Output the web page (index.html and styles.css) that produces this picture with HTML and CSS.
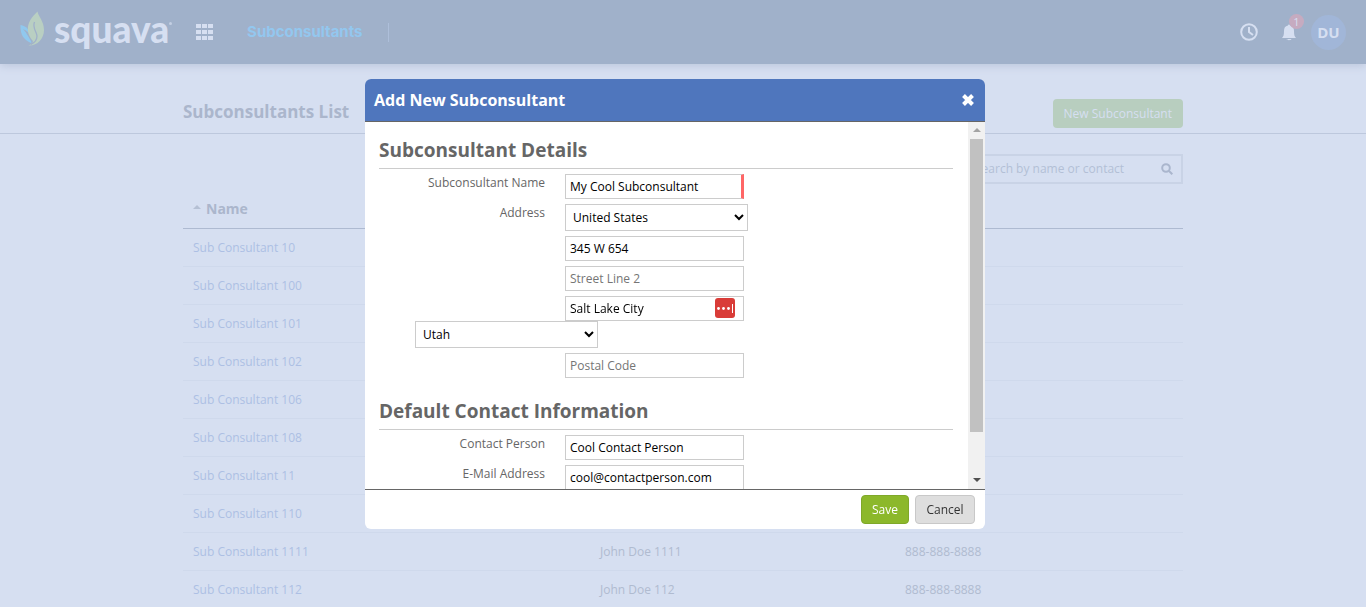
FILE: index.html
```html
<!DOCTYPE html>
<html lang="en">
<head>
<meta charset="utf-8">
<title>Subconsultants List</title>
<meta name="viewport" content="width=device-width, initial-scale=1">
<link rel="stylesheet" href="styles.css">
</head>
<body>
<div class="page">
  <header class="topbar">
    <a class="brand" href="#">
      <svg class="brand-mark" viewBox="0 0 25 36" aria-hidden="true">
        <path fill="#90c8ee" d="M0.500 14C6 15 10 19 12 25C13 28 13 30 11 32C4 29 0 24 0.500 14Z"/>
        <path fill="#a0b1ca" d="M3 18C7 22 9 27 12 32L13 27C10 22 7 20 3 18Z"/>
        <path fill="#b9cfc2" d="M17.500 0.500C18 5 24 10 24 19C24 28 17 35 8.500 34.500C11 34 13 32 13 30C6 22 5 12 17.500 0.500Z"/>
        <path fill="none" stroke="#a0b1ca" stroke-width="1.300" d="M14.500 11C12 17 17 21 17 25C17 29 14 32 11 33.500"/>
      </svg>
      <span class="brand-name">squava</span><span class="brand-reg"></span>
    </a>
    <button class="icon-btn apps" aria-label="Apps">
      <svg width="17" height="16" viewBox="0 0 17 16" fill="currentColor" aria-hidden="true">
        <path d="M0 0h5v4H0zM6 0h5v4H6zM12 0h5v4h-5zM0 6h5v4H0zM6 6h5v4H6zM12 6h5v4h-5zM0 12h5v4H0zM6 12h5v4H6zM12 12h5v4h-5z"/>
      </svg>
    </button>
    <nav class="nav"><a href="#">Subconsultants</a></nav>
    <div class="tools">
      <button class="icon-btn" aria-label="Recent">
        <svg width="18" height="18" viewBox="0 0 18 18" fill="none" stroke="currentColor" stroke-width="2" aria-hidden="true">
          <circle cx="9" cy="9" r="7.800"/><path d="M9 4v5l4 3"/>
        </svg>
      </button>
      <button class="icon-btn bell" aria-label="Notifications">
        <svg width="14" height="17" viewBox="0 0 14 17" fill="currentColor" aria-hidden="true">
          <path d="M6 1.500a1 1 0 0 1 2 0C11 2 12 4 12 7c0 4 0.500 5.500 2 7H0c1.500-1.500 2-3 2-7c0-3 1-5 4-5.500zM4.500 15h5c-0.500 1.600-4.500 1.600-5 0z"/>
        </svg>
        <span class="badge">1</span>
      </button>
      <button class="avatar">DU</button>
    </div>
  </header>

  <div class="titlebar">
    <div class="container titlebar-inner">
      <h1>Subconsultants List</h1>
      <button class="btn-new">New Subconsultant</button>
    </div>
  </div>

  <main class="container">
    <div class="searchrow">
      <div class="search">
        <input type="text" placeholder="Search by name or contact" aria-label="Search by name or contact">
        <svg width="12" height="12" viewBox="0 0 12 12" fill="none" stroke="currentColor" stroke-width="2" aria-hidden="true">
          <circle cx="5" cy="5" r="3.800"/><path d="M8 8l3.300 3.300"/>
        </svg>
      </div>
    </div>
    <table class="list">
      <colgroup><col class="col-name"><col class="col-contact"><col></colgroup>
      <thead><tr><th scope="col"><span class="sort"></span>Name</th><td></td><td></td></tr></thead>
      <tbody>
        <tr><td><a href="#">Sub Consultant 10</a></td><td></td><td></td></tr>
        <tr><td><a href="#">Sub Consultant 100</a></td><td></td><td></td></tr>
        <tr><td><a href="#">Sub Consultant 101</a></td><td></td><td></td></tr>
        <tr><td><a href="#">Sub Consultant 102</a></td><td></td><td></td></tr>
        <tr><td><a href="#">Sub Consultant 106</a></td><td></td><td></td></tr>
        <tr><td><a href="#">Sub Consultant 108</a></td><td></td><td></td></tr>
        <tr><td><a href="#">Sub Consultant 11</a></td><td></td><td></td></tr>
        <tr><td><a href="#">Sub Consultant 110</a></td><td></td><td></td></tr>
        <tr><td><a href="#">Sub Consultant 1111</a></td><td>John Doe 1111</td><td>888-888-8888</td></tr>
        <tr><td><a href="#">Sub Consultant 112</a></td><td>John Doe 112</td><td>888-888-8888</td></tr>
      </tbody>
    </table>
  </main>
</div>

<div class="overlay">
  <form class="modal" role="dialog" aria-labelledby="modal-title">
    <div class="modal-head">
      <h2 id="modal-title">Add New Subconsultant</h2>
      <button type="button" class="close" aria-label="Close">
        <svg width="12" height="12" viewBox="0 0 12 12" stroke="currentColor" stroke-width="4" aria-hidden="true"><path d="M1.500 1.500l9 9M10.500 1.500l-9 9"/></svg>
      </button>
    </div>
    <div class="modal-body">
      <div class="fields">
        <section>
          <h3>Subconsultant Details</h3>
          <div class="row"><label for="name">Subconsultant Name</label><input id="name" class="required" type="text" value="My Cool Subconsultant"></div>
          <div class="row">
            <label for="country">Address</label>
            <select id="country"><option>United States</option></select>
          </div>
          <div class="row"><input class="unlabelled" type="text" value="345 W 654" aria-label="Street Line 1"></div>
          <div class="row"><input class="unlabelled" type="text" placeholder="Street Line 2" aria-label="Street Line 2"></div>
          <div class="row">
            <div class="unlabelled city">
              <input type="text" value="Salt Lake City" aria-label="City">
              <svg class="vault" width="20" height="20" viewBox="0 0 20 20" aria-hidden="true">
                <rect width="20" height="20" rx="3" fill="#d93c38"/>
                <g fill="#fff"><circle cx="3.500" cy="10.500" r="1.400"/><circle cx="8.500" cy="10.500" r="1.400"/><circle cx="13.500" cy="10.500" r="1.400"/><path d="M17 6h1v9h-1z"/></g>
              </svg>
            </div>
          </div>
          <div class="row state"><select aria-label="State"><option>Utah</option></select></div>
          <div class="row"><input class="unlabelled" type="text" placeholder="Postal Code" aria-label="Postal Code"></div>
        </section>
        <section>
          <h3>Default Contact Information</h3>
          <div class="row"><label for="person">Contact Person</label><input id="person" type="text" value="Cool Contact Person"></div>
          <div class="row"><label for="email">E-Mail Address</label><input id="email" type="text" value="cool@contactperson.com"></div>
        </section>
      </div>
      <div class="scroll" aria-hidden="true">
        <span class="arrow up"></span>
        <span class="track"><span class="thumb"></span></span>
        <span class="arrow down"></span>
      </div>
    </div>
    <div class="modal-foot">
      <button type="button" class="btn save">Save</button>
      <button type="button" class="btn cancel">Cancel</button>
    </div>
  </form>
</div>
</body>
</html>
```
FILE: styles.css
```css
* { box-sizing: border-box; }
html, body { height: 100%; }
body {
  margin: 0;
  overflow: hidden;
  background: #d6dff1;
  color: #b0bbd0;
  font: 12px/18px "Open Sans", "Noto Sans", sans-serif;
}
button, input, select { font: inherit; margin: 0; }
button { cursor: pointer; }
a { text-decoration: none; }
h1, h2, h3 { margin: 0; }

.page { height: 100%; overflow: hidden; }
.container { width: 1000px; max-width: 100%; margin: 0 auto; }

/* Top bar */
.topbar {
  display: flex;
  align-items: center;
  height: 64px;
  padding: 0 20px;
  background: #a0b1ca;
  box-shadow: 0 2px 8px #bcc7dc;
  color: #d6dff1;
}
.brand { display: flex; align-items: center; color: #d6dff1; }
.brand-mark { width: 25px; height: 36px; margin: 0 9px 6px 0; }
.brand-name { font: 900 37px/48px Lato, sans-serif; padding-bottom: 6px; }
.brand-reg { width: 3px; height: 3px; border-radius: 50%; background: #c3cfe3; margin-bottom: 18px; }
.icon-btn { display: flex; padding: 0; border: 0; background: none; color: #d6dff1; }
.apps { margin-left: 24px; }
.nav { margin-left: 34px; padding-right: 25px; border-right: 1px solid #aebfda; }
.nav a { color: #93c7ef; font: 700 15px/17px Inter, sans-serif; }
.tools { display: flex; align-items: center; margin-left: auto; }
.bell { position: relative; margin: 0 15px 0 24px; }
.badge {
  position: absolute;
  left: 7px;
  top: -10px;
  width: 15px;
  height: 15px;
  border-radius: 50%;
  background: #c6abc0;
  font-size: 11px;
  line-height: 15px;
  text-align: center;
}
.avatar {
  width: 35px;
  height: 35px;
  padding: 0;
  border: 0;
  border-radius: 50%;
  background: #a1b6d8;
  color: #d6dff1;
  font-size: 15px;
  font-weight: 700;
}

/* Page title */
.titlebar { padding: 35px 0 5px; border-bottom: 1px solid #bdc8dd; }
.titlebar-inner { display: flex; align-items: center; justify-content: space-between; }
h1 { font-size: 17px; line-height: 24px; font-weight: 700; color: #abb6cc; padding-bottom: 4px; }
.btn-new {
  height: 29px;
  padding: 0 11px;
  border: 0;
  border-radius: 4px;
  background: #b8cebf;
  color: #d6dff1;
}

/* Search and list */
.searchrow { display: flex; justify-content: flex-end; padding-top: 20px; }
.search {
  display: flex;
  align-items: center;
  width: 218px;
  height: 30px;
  padding: 0 8px;
  border: 2px solid #c9d3e6;
  color: #aab6cd;
}
.search input { flex: 1; min-width: 0; padding: 0; border: 0; outline: 0; background: none; }
.search input::placeholder { color: #b3bfd6; opacity: 1; }

.list { width: 100%; margin-top: 6px; border-collapse: collapse; table-layout: fixed; }
.col-name { width: 407px; }
.col-contact { width: 305px; }
.list th, .list td { height: 38px; padding: 0 10px; text-align: left; border-bottom: 1px solid #cfd9ec; }
.list tbody td { padding-top: 1px; }
.list thead th, .list thead td { border-bottom: 1px solid #aebad1; }
.list th { color: #abb6cc; font-size: 14px; font-weight: 700; }
.list a { color: #adbfe4; }
.sort {
  display: inline-block;
  margin-right: 5px;
  border: 4px solid transparent;
  border-top: 0;
  border-bottom-color: #b5c0d4;
  vertical-align: 5px;
}

/* Modal */
.overlay {
  position: fixed;
  inset: 0;
  display: flex;
  align-items: center;
  justify-content: center;
  padding-right: 16px;
}
.modal {
  display: flex;
  flex-direction: column;
  width: 620px;
  max-width: 100%;
  height: 450px;
  max-height: 100%;
  border-radius: 6px;
  background: #fff;
  overflow: hidden;
  color: #666;
}
.modal-head {
  display: flex;
  align-items: center;
  justify-content: space-between;
  flex: none;
  height: 43px;
  padding: 0 11px 0 9px;
  background: #4f76bd;
  border-bottom: 1px solid #666;
  color: #fff;
}
.modal-head h2 { font-size: 16px; line-height: 24px; font-weight: 700; }
.close { display: flex; padding: 0; border: 0; background: none; color: #fff; }
.modal-body { display: flex; flex: 1; min-height: 0; }
.fields { flex: 1; overflow: hidden; padding: 14px 15px 0 14px; }
section { margin-bottom: 19px; }
h3 {
  margin-bottom: 5px;
  padding-bottom: 4px;
  border-bottom: 1px solid #ccc;
  font-size: 19px;
  line-height: 28px;
  font-weight: 700;
  color: #666;
}
.row { display: grid; grid-template-columns: 166px 1fr; column-gap: 20px; margin-bottom: 5px; }
.row label { text-align: right; }
.unlabelled { grid-column: 2; }
.row input {
  width: 179px;
  height: 25px;
  padding: 0 4px;
  border: 1px solid #ccc;
  background: #fff;
  color: #000;
  outline: 0;
}
.row input::placeholder { color: #757575; opacity: 1; }
.row .required { border-right: 3px solid #f66; }
select {
  width: 183px;
  height: 27px;
  padding: 0 3px;
  border: 1px solid #ccc;
  border-radius: 0;
  background: #fff;
  color: #000;
}
.city { position: relative; width: 179px; height: 25px; }
.vault { position: absolute; right: 9px; top: 2px; }
.state { display: block; margin-top: -5px; padding-left: 36px; }
.state select { display: block; }

.scroll { display: flex; flex-direction: column; width: 17px; background: #f1f1f1; }
.arrow { display: flex; align-items: center; justify-content: center; height: 17px; }
.arrow::before { content: ""; border: 4px solid transparent; }
.up::before { border-top: 0; border-bottom-color: #a3a3a3; }
.down::before { border-bottom: 0; border-top-color: #505050; }
.track { flex: 1; padding: 0 2px; }
.thumb { display: block; height: 88%; background: #c1c1c1; }

.modal-foot {
  display: flex;
  align-items: center;
  justify-content: flex-end;
  flex: none;
  gap: 6px;
  height: 40px;
  padding: 0 10px;
  border-top: 1px solid #666;
}
.btn { height: 29px; padding: 1px 10px 0; border-radius: 4px; }
.save { border: 1px solid #7fa829; background: #8cb82b; color: #fff; }
.cancel { min-width: 60px; border: 1px solid #c8c8c8; background: #dedede; color: #333; }
```
